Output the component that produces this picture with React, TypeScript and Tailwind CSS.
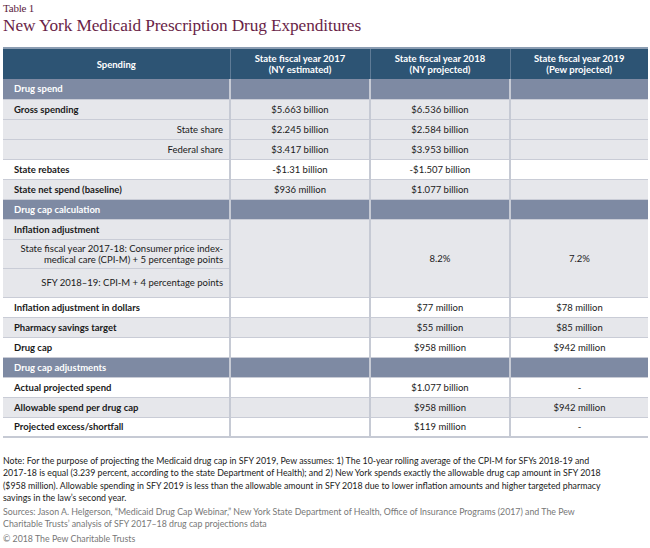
import React from "react";

type Row =
  | { kind: "band"; label: string }
  | { kind: "row"; label: string; sub?: boolean; white?: boolean; a?: string; b?: string; c?: string };

const rows: Row[] = [
  { kind: "band", label: "Drug spend" },
  { kind: "row", label: "Gross spending", a: "$5.663 billion", b: "$6.536 billion" },
  { kind: "row", label: "State share", sub: true, a: "$2.245 billion", b: "$2.584 billion" },
  { kind: "row", label: "Federal share", sub: true, a: "$3.417 billion", b: "$3.953 billion" },
  { kind: "row", label: "State rebates", white: true, a: "-$1.31 billion", b: "-$1.507 billion" },
  { kind: "row", label: "State net spend (baseline)", a: "$936 million", b: "$1.077 billion" },
  { kind: "band", label: "Drug cap calculation" },
];

const rows2: Row[] = [
  { kind: "row", label: "Inflation adjustment in dollars", white: true, b: "$77 million", c: "$78 million" },
  { kind: "row", label: "Pharmacy savings target", b: "$55 million", c: "$85 million" },
  { kind: "row", label: "Drug cap", white: true, b: "$958 million", c: "$942 million" },
  { kind: "band", label: "Drug cap adjustments" },
  { kind: "row", label: "Actual projected spend", white: true, b: "$1.077 billion", c: "-" },
  { kind: "row", label: "Allowable spend per drug cap", b: "$958 million", c: "$942 million" },
  { kind: "row", label: "Projected excess/shortfall", white: true, b: "$119 million", c: "-" },
];

const cell = "border-b border-b-[#c9ccd6] h-[20px] align-middle";
const div = "border-r-2 border-r-[#c6cad4]";

function Rows({ list }: { list: Row[] }) {
  return (
    <>
      {list.map((r, i) =>
        r.kind === "band" ? (
          <tr key={i} className="bg-[#7e8aa3] text-white font-bold">
            <td className={`${cell} border-b-[#7e8aa3] ${div} pl-[11px]`}>{r.label}</td>
            <td className={`${cell} border-b-[#7e8aa3] ${div}`}></td>
            <td className={`${cell} border-b-[#7e8aa3] ${div}`}></td>
            <td className={`${cell} border-b-[#7e8aa3]`}></td>
          </tr>
        ) : (
          <tr key={i} className={r.white ? "bg-white" : "bg-[#e6e7eb]"}>
            <td
              className={`${cell} ${div} ${
                r.sub ? "text-right pr-[6px] font-normal" : "pl-[11px] font-bold"
              }`}
            >
              {r.label}
            </td>
            <td className={`${cell} ${div} text-center`}>{r.a}</td>
            <td className={`${cell} ${div} text-center`}>{r.b}</td>
            <td className={`${cell} text-center`}>{r.c}</td>
          </tr>
        )
      )}
    </>
  );
}

export default function App() {
  return (
    <div
      className="w-[650px] h-[548px] bg-white text-[#1a1a1a] overflow-hidden"
      style={{ fontFamily: "Lato, 'Open Sans', sans-serif" }}
    >
      <div className="pl-[3px] pt-[2px]" style={{ fontFamily: "'Liberation Serif', serif" }}>
        <div className="text-[11px] leading-[13px] text-[#5a2140] tracking-[-0.2px]">Table 1</div>
        <div className="mt-[1px] text-[17.3px] leading-[20px] text-[#6a1f48] tracking-[-0.1px]">
          New York Medicaid Prescription Drug Expenditures
        </div>
      </div>

      <table className="mt-[11px] ml-[3px] w-[645px] table-fixed border-collapse text-[9.5px] leading-[11px] border-t-2 border-t-[#8b9db2] border-b-2 border-b-[#c6cad4]">
        <colgroup>
          <col className="w-[227px]" />
          <col className="w-[140px]" />
          <col className="w-[140px]" />
          <col className="w-[138px]" />
        </colgroup>
        <thead>
          <tr className="bg-[#2d5474] text-white font-bold h-[31px]">
            <th className="border-r border-r-[#5f7b96] text-center align-middle">Spending</th>
            <th className="border-r border-r-[#5f7b96] text-center align-middle">
              State fiscal year 2017
              <br />
              (NY estimated)
            </th>
            <th className="border-r border-r-[#5f7b96] text-center align-middle">
              State fiscal year 2018
              <br />
              (NY projected)
            </th>
            <th className="text-center align-middle">
              State fiscal year 2019
              <br />
              (Pew projected)
            </th>
          </tr>
        </thead>
        <tbody>
          <Rows list={rows} />
          <tr className="bg-[#e6e7eb]">
            <td className={`${cell} ${div} pl-[11px] font-bold`}>Inflation adjustment</td>
            <td rowSpan={3} className={`${div} border-b border-b-[#c9ccd6] bg-[#e6e7eb]`}></td>
            <td rowSpan={3} className={`${div} border-b border-b-[#c9ccd6] text-center align-middle bg-[#e6e7eb]`}>
              8.2%
            </td>
            <td rowSpan={3} className="border-b border-b-[#c9ccd6] text-center align-middle bg-[#e6e7eb]">
              7.2%
            </td>
          </tr>
          <tr className="bg-[#e6e7eb]">
            <td className={`border-b border-b-[#c9ccd6] ${div} h-[29px] text-right pr-[6px] leading-[11px]`}>
              State fiscal year 2017-18: Consumer price index-
              <br />
              medical care (CPI-M) + 5 percentage points
            </td>
          </tr>
          <tr className="bg-[#e6e7eb]">
            <td className={`border-b border-b-[#c9ccd6] ${div} h-[29px] text-right pr-[6px]`}>
              SFY 2018–19: CPI-M + 4 percentage points
            </td>
          </tr>
          <Rows list={rows2} />
        </tbody>
      </table>

      <div className="pl-[3px] mt-[17px] text-[8.8px] leading-[12.3px]">
        <p className="text-[#1a1a1a]">
          Note: For the purpose of projecting the Medicaid drug cap in SFY 2019, Pew assumes: 1) The 10-year rolling average of the CPI-M for SFYs 2018-19 and
          <br />
          2017-18 is equal (3.239 percent, according to the state Department of Health); and 2) New York spends exactly the allowable drug cap amount in SFY 2018
          <br />
          ($958 million). Allowable spending in SFY 2019 is less than the allowable amount in SFY 2018 due to lower inflation amounts and higher targeted pharmacy
          <br />
          savings in the law’s second year.
        </p>
        <p className="mt-[2px] text-[#777777]">
          Sources: Jason A. Helgerson, “Medicaid Drug Cap Webinar,” New York State Department of Health, Office of Insurance Programs (2017) and The Pew
          <br />
          Charitable Trusts’ analysis of SFY 2017–18 drug cap projections data
        </p>
        <p className="mt-[2px] text-[#777777]">© 2018 The Pew Charitable Trusts</p>
      </div>
    </div>
  );
}
